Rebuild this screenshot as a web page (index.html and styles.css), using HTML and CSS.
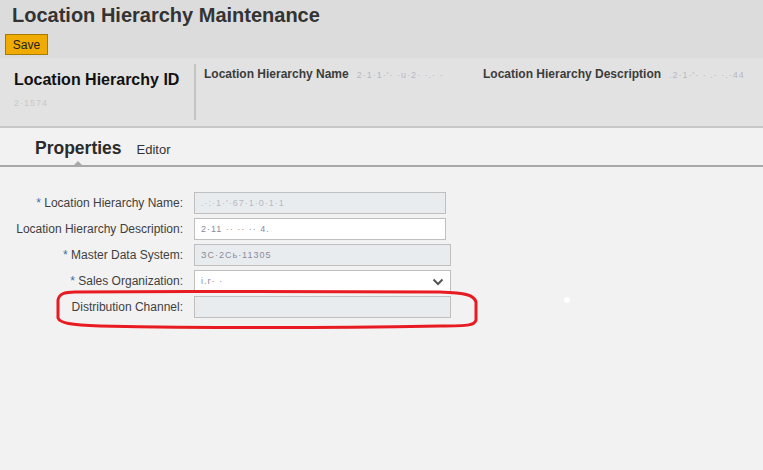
FILE: index.html
```html
<!DOCTYPE html>
<html>
<head>
<meta charset="utf-8">
<link rel="stylesheet" href="styles.css">
</head>
<body>
<div class="page">
  <div class="titlebar">
    <h1 class="title">Location Hierarchy Maintenance</h1>
    <button class="save">Save</button>
  </div>
  <div class="header">
    <div class="idblock">
      <div class="idlabel">Location Hierarchy ID</div>
      <div class="idvalue">2·1574</div>
    </div>
    <div class="sep"></div>
    <div class="attrs">
      <span class="attr name"><b>Location Hierarchy Name</b><span class="noise">2·1·1·'· ·u·2· ·.· ·</span></span>
      <span class="attr"><b>Location Hierarchy Description</b><span class="noise">.2·1·'· · .· ·.·44</span></span>
    </div>
  </div>
  <div class="tabs">
    <span class="tab active">Properties</span>
    <span class="tab">Editor</span>
    <span class="notch"></span>
  </div>
  <div class="form">
    <div class="row">
      <label class="lbl"><span class="req">*</span> Location Hierarchy Name:</label>
      <div class="field ro w1"><span class="noise">.·:·1·'·67·1·0·1·1</span></div>
    </div>
    <div class="row">
      <label class="lbl">Location Hierarchy Description:</label>
      <div class="field w1"><span class="noise dark">2·11 ·· ·· ·· 4.</span></div>
    </div>
    <div class="row">
      <label class="lbl"><span class="req">*</span> Master Data System:</label>
      <div class="field ro w2"><span class="noise dark">ЗC·2Сь·11305</span></div>
    </div>
    <div class="row">
      <label class="lbl"><span class="req">*</span> Sales Organization:</label>
      <div class="field w2 sel"><span class="noise dark">i.r· ·</span>
        <svg class="chev" width="12" height="8" viewBox="0 0 12 8"><path d="M1.5 1.5 L6 6 L10.5 1.5" fill="none" stroke="#555" stroke-width="2"/></svg>
      </div>
    </div>
    <div class="row">
      <label class="lbl">Distribution Channel:</label>
      <div class="field ro w2"></div>
    </div>
  </div>
  <svg class="mark" width="763" height="470" viewBox="0 0 763 470">
    <path d="M75 292 C200 291 350 291 440 292 C466 293 474 295 476 302 L476 320 C475 325 470 326 440 326 C330 328 200 328 100 326 C70 325 60 323 58 318 L58 300 C59 294 64 292 75 292 Z" fill="none" stroke="#e81a22" stroke-width="3"/>
    <circle cx="567" cy="300" r="3" fill="#ffffff"/>
  </svg>
</div>
</body>
</html>
```
FILE: styles.css
```css
html, body {
  margin: 0;
  padding: 0;
}
body {
  background: #f2f2f2;
  font-family: "Liberation Sans", Arial, sans-serif;
  color: #333;
  width: 763px;
  height: 470px;
  overflow: hidden;
}
.page {
  position: relative;
  width: 763px;
  height: 470px;
}
.titlebar {
  background: #dcdcdc;
  height: 58px;
  box-sizing: border-box;
  padding: 3px 0 0 5px;
}
.title {
  margin: 0 0 0 7px;
  font-size: 20px;
  line-height: 25px;
  font-weight: bold;
  color: #333;
}
.save {
  display: block;
  margin-top: 6px;
  width: 43px;
  height: 21px;
  padding: 0;
  background: #f0ab00;
  border: 1px solid #a97a00;
  font-family: "Liberation Sans", Arial, sans-serif;
  font-size: 12px;
  color: #222;
  border-radius: 0;
}
.header {
  background: #e2e2e2;
  height: 68px;
  border-bottom: 2px solid #c8c8c8;
  display: flex;
}
.idblock {
  width: 180px;
  padding: 12px 0 0 14px;
  box-sizing: border-box;
}
.idlabel {
  font-size: 16px;
  font-weight: bold;
  color: #111;
  line-height: 20px;
}
.idvalue {
  margin-top: 8px;
  font-size: 9px;
  color: #c8c8c8;
  letter-spacing: 1px;
}
.sep {
  width: 2px;
  background: #c4c4c4;
  margin: 6px 0 6px 14px;
}
.attrs {
  display: flex;
  padding: 6px 0 0 8px;
  white-space: nowrap;
}
.attr.name {
  width: 279px;
}
.attr b {
  font-size: 12px;
  color: #3c3c3c;
  margin-right: 8px;
}
.noise {
  font-size: 9px;
  color: #b8b8c4;
  letter-spacing: 1px;
}
.noise.dark {
  color: #8a8a9a;
}
.tabs {
  height: 39px;
  border-bottom: 2px solid #a8a8a8;
  display: flex;
  align-items: center;
  padding: 4px 0 0 35px;
  box-sizing: border-box;
  gap: 15px;
  position: relative;
}
.tab {
  font-size: 13px;
  color: #333;
  padding-top: 2px;
}
.tab.active {
  font-size: 17.5px;
  font-weight: bold;
  color: #2b2b2b;
  padding-top: 0;
}
.notch {
  position: absolute;
  left: 74px;
  bottom: 0;
  width: 0;
  height: 0;
  border-left: 4px solid transparent;
  border-right: 4px solid transparent;
  border-bottom: 4px solid #a8a8a8;
}
.form {
  padding-top: 25px;
  display: flex;
  flex-direction: column;
  gap: 4px;
}
.row {
  display: flex;
  align-items: center;
  height: 22px;
}
.lbl {
  width: 194px;
  text-align: right;
  font-size: 12px;
  color: #3f3f3f;
  padding-right: 11px;
  box-sizing: border-box;
  white-space: nowrap;
}
.req {
  color: #3870a8;
}
.field {
  height: 22px;
  box-sizing: border-box;
  border: 1px solid #bfbfbf;
  background: #ffffff;
  display: flex;
  align-items: center;
  padding-left: 6px;
  position: relative;
}
.field.ro {
  background: #e9ecef;
}
.w1 { width: 252px; }
.w2 { width: 257px; }
.sel .chev {
  position: absolute;
  right: 6px;
  top: 7px;
}
.mark {
  position: absolute;
  left: 0;
  top: 0;
  pointer-events: none;
}
```
